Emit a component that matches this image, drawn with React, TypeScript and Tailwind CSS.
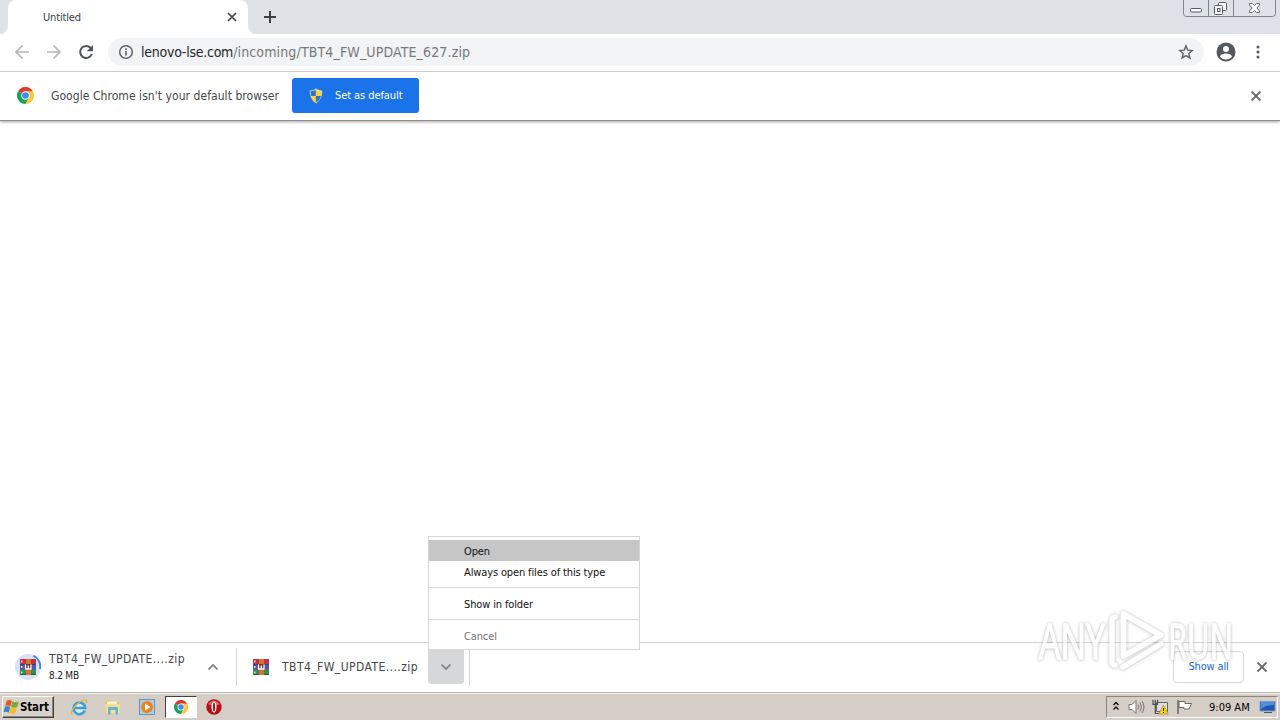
import React from "react";

const Chrome = ({ size }: { size: number }) => (
  <svg width={size} height={size} viewBox="0 0 48 48" className="shrink-0">
    <path d="M24 24 3.2 12A24 24 0 0 1 44.8 12Z" fill="#db3a2c" />
    <path d="M3.2 12A24 24 0 0 0 24 48L34.4 30 24 24Z" fill="#1da05a" />
    <path d="M44.8 12A24 24 0 0 1 24 48L34.4 30 24 12Z" fill="#fcc934" />
    <circle cx="24" cy="24" r="12" fill="#fff" />
    <circle cx="24" cy="24" r="9.3" fill="#4587ec" />
  </svg>
);

const Archive = () => (
  <svg width="16" height="16" viewBox="0 0 16 16" className="shrink-0">
    <path d="M0 0h16v5H0z" fill="#c03048" />
    <path d="M0 5.5h16v5H0z" fill="#4856c8" />
    <path d="M0 11h16v5H0z" fill="#2f9048" />
    <path d="M0 5h16v.7H0zM0 10.4h16v.7H0zM0 15.4h16v.6H0z" fill="#2c2030" />
    <path d="M1 1.5h1.5v2H1zM1 7h1.5v2H1zM1 12.5h1.5v2H1z" fill="#e8dcc8" />
    <path d="M6 0h5v16H6z" fill="#d9702c" />
    <path d="M4.500 5h7.500v6H4.500z" fill="#6b3a34" />
    <path d="M5.500 5.500V10H11V5.500M8.250 6.500V10" fill="none" stroke="#fff" strokeWidth="1.3" />
  </svg>
);

const Close = () => (
  <svg width="12" height="12" viewBox="0 0 12 12" className="shrink-0">
    <path d="m1.5 1.5 9 9m0-9-9 9" stroke="#686c70" strokeWidth="1.8" />
  </svg>
);

const Shield = () => (
  <svg width="14" height="16" viewBox="0 0 14 16" className="shrink-0">
    <path d="M7 .5Q4 2.400.7 2.400.3 11 7 15.500 13.700 11 13.300 2.400 10 2.400 7 .5Z" fill="#dfe7ee" stroke="#5f7f9f" strokeWidth=".5" />
    <path d="M6.900 1.800Q4.500 3.200 1.700 3.300q0 2 .3 4.600h4.900Z" fill="#2f74c4" />
    <path d="M6.900 1.800q2.600 1.400 5.400 1.500 0 2-.3 4.600H6.900Z" fill="#fbd43a" />
    <path d="M6.900 7.900H2q1 4.200 4.900 6.600Z" fill="#fbd43a" />
    <path d="M6.900 7.900H12q-1 4.200-5.100 6.600Z" fill="#2f74c4" />
  </svg>
);

const Flag = () => (
  <svg width="17" height="16" viewBox="0 0 16 16" className="shrink-0">
    <path d="M3.200 1.600Q6 .2 8.400 1.900L6.900 7.500Q4.500 5.800 1.700 7.100Z" fill="#e9572b" />
    <path d="M9 2.300q2.800 1.600 6.400.2l-1.600 5.500q-3.200 1.400-6.200-.2Z" fill="#76ad36" />
    <path d="M1.500 7.800q2.800-1.300 5.200.3L5.200 13.700Q2.800 12 0 13.300Z" fill="#3f82c9" />
    <path d="M7.400 8.500q2.900 1.500 6.200.2L12 14.200q-3.200 1.400-6.100-.2Z" fill="#f6bd2b" />
  </svg>
);

const TabStrip = () => (
  <div className="relative flex h-[34px] shrink-0 bg-[#dee1e6]">
    <div className="flex w-2 items-end bg-white"><div className="h-full w-full rounded-br-lg bg-[#dee1e6]" /></div>
    <div className="flex w-[240px] items-center rounded-t-lg bg-white pr-[10px] pl-[35px]">
      <span className="flex-1 pt-[2px] text-[11px] tracking-[-0.17px] text-[#3c4043]">Untitled</span>
      <svg width="12" height="12" viewBox="0 0 12 12"><path d="m2 2 8 8m0-8-8 8" stroke="#45494d" strokeWidth="1.7" /></svg>
    </div>
    <div className="w-2 bg-white"><div className="h-full w-full rounded-bl-lg bg-[#dee1e6]" /></div>
    <svg width="14" height="14" viewBox="0 0 14 14" className="mt-[10px] ml-[7px]"><path d="M7 1v12M1 7h12" stroke="#3c4043" strokeWidth="2" /></svg>
    <svg width="94" height="18" viewBox="0 0 94 18" className="mr-[3px] ml-auto" fill="none">
      <path d="M.5 0v13.5q0 3 3 3h86q3 0 3-3V0M25.500 0v16.500M50.500 0v16.500" stroke="#80848c" />
      <rect x="7.500" y="8.500" width="11" height="3.500" rx="1" fill="#f8f9fa" stroke="#555b66" />
      <rect x="35.500" y="2.500" width="8" height="8" rx="1" fill="#f8f9fa" stroke="#555b66" />
      <rect x="31.500" y="5.500" width="8" height="9" rx="1" fill="#f8f9fa" stroke="#555b66" />
      <rect x="34.500" y="8.500" width="2.500" height="3" stroke="#555b66" />
      <path d="M66.500 3.500h3l2 2 2-2h3v1.500L74 8l2.500 3v1.500h-3l-2-2-2 2h-3V11L69 8l-2.500-3Z" fill="#f8f9fa" stroke="#666b74" />
    </svg>
  </div>
);

const Toolbar = () => (
  <div className="flex h-[38px] shrink-0 items-center border-b border-[#d8dadd] bg-white pb-[2px] pl-[14px]">
    <svg width="16" height="16" viewBox="0 0 16 16" fill="none" stroke="#b5b7ba" strokeWidth="1.700"><path d="M15 8H2.500M8.500 1.500 2 8l6.500 6.500" /></svg>
    <svg width="16" height="16" viewBox="0 0 16 16" fill="none" stroke="#b5b7ba" strokeWidth="1.700" className="ml-4"><path d="M1 8h12.500M7.500 1.500 14 8l-6.500 6.500" /></svg>
    <svg width="16" height="16" viewBox="0 0 16 16" className="ml-4"><path d="M12.700 4A6 6 0 1 0 13.800 10" fill="none" stroke="#505458" strokeWidth="2" /><path d="M15 1v6.300H8.700Z" fill="#505458" /></svg>
    <div className="ml-[14px] flex h-7 w-[1096px] items-center rounded-full bg-[#f1f3f4] pr-[10px] pl-[10px]">
      <svg width="16" height="16" viewBox="0 0 16 16" fill="none" stroke="#5f6368"><circle cx="8" cy="8" r="6.300" strokeWidth="1.500" /><path d="M8 7v4.500M8 4.300V6" strokeWidth="1.600" /></svg>
      <span className="ml-[7px] flex-1 pt-[2px] text-[14px] tracking-[0.14px] whitespace-nowrap text-[#75797e]"><span className="tracking-[-0.25px] text-[#25282b]">lenovo-lse.com</span>/incoming/TBT4_FW_UPDATE_627.zip</span>
      <svg width="16" height="16" viewBox="0 0 24 24" fill="none" stroke="#5f6368" strokeWidth="2.200"><path d="m12 3 2.600 6.200 6.700.6-5.100 4.400 1.600 6.600-5.800-3.500-5.800 3.500 1.600-6.600-5.100-4.400 6.700-.6Z" /></svg>
    </div>
    <svg width="20" height="20" viewBox="0 0 20 20" className="ml-3"><circle cx="10" cy="10" r="9.500" fill="#54585d" /><circle cx="10" cy="7" r="3" fill="#fff" /><path d="M4 14.500q1-3 6-3t6 3q-2 3-6 3t-6-3Z" fill="#fff" /></svg>
    <svg width="4" height="16" viewBox="0 0 4 16" className="ml-5" fill="#54585d"><circle cx="2" cy="3" r="1.500" /><circle cx="2" cy="8" r="1.500" /><circle cx="2" cy="13" r="1.500" /></svg>
  </div>
);

const InfoBar = () => (
  <div className="z-10 flex h-[49px] shrink-0 items-center border-b border-[#8d8d8d] bg-white pr-[18px] pb-px pl-[17px] shadow-[0_1px_3px_rgba(0,0,0,0.35)]">
    <Chrome size={17} />
    <span className="ml-[17px] w-[241px] text-[12px] tracking-[0.06px] whitespace-nowrap text-[#44474b]">Google Chrome isn't your default browser</span>
    <button className="flex h-[35px] w-[127px] items-center rounded-[3px] bg-[#1a73e8] pl-[17px] text-[11px] tracking-[-0.08px] whitespace-nowrap text-white">
      <Shield />
      <span className="ml-3 pt-px">Set as default</span>
    </button>
    <div className="ml-auto"><Close /></div>
  </div>
);

const Menu = () => (
  <div className="absolute bottom-[42px] left-[428px] z-20 h-[114px] w-[212px] border border-[#d6d6d6] bg-white pt-[3px] text-[11px] tracking-[-0.13px] whitespace-nowrap text-[#111]">
    <div className="flex h-[21px] items-center bg-[#c6c6c6] pt-[3px] pl-[35px]">Open</div>
    <div className="flex h-[22px] items-center pt-[2px] pl-[35px]">Always open files of this type</div>
    <div className="mt-1 flex h-8 items-center border-t border-[#d9d9d9] pt-[3px] pl-[35px]">Show in folder</div>
    <div className="flex h-8 items-center border-t border-[#d9d9d9] pt-[3px] pl-[35px] text-[#757575]">Cancel</div>
  </div>
);

const Shelf = () => (
  <div className="relative flex h-[50px] shrink-0 items-center border-t border-[#d6d8da] bg-white pb-px">
    <div className="flex w-[236px] items-center pl-[15px]">
      <div className="relative flex size-[26px] items-center justify-center rounded-full bg-[#d6e1f5]">
        <Archive />
        <svg width="26" height="26" viewBox="0 0 26 26" className="absolute inset-0" fill="none"><path d="M18.500 1.700A12.200 12.200 0 0 1 25 15" stroke="#4285f4" strokeWidth="2" /></svg>
      </div>
      <div className="ml-2 w-[158px] whitespace-nowrap">
        <div className="text-[12px] leading-[16px] tracking-[0.44px] text-[#44474b]">TBT4_FW_UPDATE....zip</div>
        <div className="text-[10px] leading-[17px] tracking-[-0.2px] text-[#202124]">8.2 MB</div>
      </div>
      <svg width="12" height="8" viewBox="0 0 12 8" fill="none" stroke="#75787c" strokeWidth="1.700"><path d="m1.500 6.500 4.500-4.500 4.500 4.500" /></svg>
    </div>
    <div className="flex h-[38px] w-[192px] items-center border-l border-[#d3d5d8] pl-4">
      <Archive />
      <span className="ml-[13px] text-[12px] tracking-[0.44px] whitespace-nowrap text-[#44474b]">TBT4_FW_UPDATE....zip</span>
    </div>
    <div className="flex h-[34px] w-9 items-center justify-center rounded-b-[3px] bg-[#d6d7d8]">
      <svg width="12" height="8" viewBox="0 0 12 8" fill="none" stroke="#7b7e82" strokeWidth="1.700"><path d="M1.500 1.500 6 6l4.500-4.500" /></svg>
    </div>
    <div className="ml-[5px] h-[38px] w-px bg-[#d3d5d8]" />
    <button className="ml-auto flex h-8 w-[71px] items-center justify-center rounded-[4px] border border-[#d6d9dd] bg-white pt-px text-[11px] tracking-[-0.15px] text-[#1967d2]">Show all</button>
    <div className="mr-3 ml-3"><Close /></div>
    <Menu />
  </div>
);

const Taskbar = () => (
  <div className="flex h-7 shrink-0 items-center border-t border-[#b9b7b3] bg-[#d5cec6] pt-px shadow-[inset_0_1px_0_#f5f3ef]">
    <button className="ml-[2px] flex h-[22px] w-[52px] items-center border border-t-white border-r-[#404040] border-b-[#404040] border-l-white bg-[#d8d2ca] text-[11.5px] font-bold tracking-[-0.15px] text-black shadow-[inset_-1px_-1px_0_#8c8780]">
      <Flag />
      <span className="pt-px">Start</span>
    </button>
    <svg width="18" height="18" viewBox="0 0 18 18" className="ml-4 shrink-0" fill="none">
      <circle cx="9.500" cy="10" r="5.700" fill="#d8edf8" />
      <path d="M14.800 12.500A5.800 5.800 0 1 1 15.200 10H5" stroke="#3c9ddd" strokeWidth="2.500" />
      <path d="M2.500 16.500C-1 14.500 6 5 14 2q4-1 2.500 2.700" stroke="#e2b439" strokeWidth="1.200" />
    </svg>
    <svg width="18" height="18" viewBox="0 0 18 18" className="ml-4 shrink-0">
      <path d="M1.500 2.500h5l1 1.500h8v11h-14Z" fill="#e5c565" />
      <path d="M3 3.500h10V8H3z" fill="#f7f3cd" /><path d="M1.500 6h14.500v9H1.500z" fill="#f3dd91" />
      <path d="M4 16.500V10q0-1 1-1h8q1 0 1 1v6.500h-2.500V12h-5v4.500Z" fill="#65b5db" />
    </svg>
    <svg width="18" height="18" viewBox="0 0 18 18" className="ml-4 shrink-0">
      <rect x="1.500" y="1.500" width="15" height="15" fill="#a9cdea" stroke="#5e96c4" />
      <circle cx="9" cy="9" r="6" fill="#ef8318" /><path d="m7 5.500 5.500 3.500L7 12.500Z" fill="#fff" />
    </svg>
    <div className="ml-[9px] flex h-[22px] w-8 items-center justify-center border border-t-[#404040] border-r-white border-b-white border-l-[#404040] bg-white"><Chrome size={14} /></div>
    <svg width="16" height="16" viewBox="0 0 16 16" className="ml-[9px] shrink-0"><circle cx="8" cy="8" r="7.700" fill="#b71118" /><path d="M2 5q6-7 12 0-6 3-12 0Z" fill="#dc6b6c" /><ellipse cx="8" cy="8" rx="2.500" ry="5.500" fill="#fff" /><ellipse cx="8" cy="8" rx="1.100" ry="4.500" fill="#aa151a" /></svg>
    <div className="mr-[2px] ml-auto flex h-[22px] w-[172px] items-center border border-t-[#8b8680] border-r-white border-b-white border-l-[#8b8680] text-[11px] text-black">
      <svg width="8" height="10" viewBox="0 0 8 10" className="mb-[2px] ml-[5px]" fill="none" stroke="#111" strokeWidth="1.400"><path d="m1.500 4 2.500-2.500L6.500 4m-5 4.500L4 6l2.500 2.500" /></svg>
      <svg width="17" height="16" viewBox="0 0 17 16" className="ml-2 shrink-0" fill="none"><path d="M1 5.500h3l4-4v13l-4-4H1Z" fill="#fff" stroke="#77736e" /><path d="M10 5.500q1.500 2.500 0 5M12 3.500q3 4.500 0 9M14 2q4 6 0 12" stroke="#77736e" /></svg>
      <svg width="17" height="16" viewBox="0 0 17 16" className="ml-[7px] shrink-0" fill="none"><path d="M4.500 3.500h11v9h-11z" fill="#d9dde2" stroke="#66676a" /><path d="M1 .8v4.500h4.500V.8M3.300 1v13.500h5" stroke="#514e4a" strokeWidth="1.200" /><path d="m11.500 6 4.700 9H6.800Z" fill="#f7cf24" stroke="#b68b14" strokeWidth=".7" /><path d="M11.500 9v3m0 1v1" stroke="#222" /></svg>
      <svg width="17" height="16" viewBox="0 0 17 16" className="ml-[7px] shrink-0"><path d="M2 1v14" stroke="#68645f" strokeWidth="1.500" /><path d="M3 2.500h6v2h6.500L13 10H8V8.500H3Z" fill="#fff" stroke="#68645f" /></svg>
      <span className="ml-[16px] w-[42px] pt-[2px] whitespace-nowrap">9:09 AM</span>
      <svg width="17" height="14" viewBox="0 0 17 14" className="ml-[8px] shrink-0"><path d="M1 1.500h15v9.500H1z" fill="#1d57ad" stroke="#7898c2" /><path d="M2 2h13v3Q7 5 2 9Z" fill="#528ed6" /><path d="M5 12.500h8" stroke="#555" /></svg>
    </div>
  </div>
);

const Watermark = () => (
  <svg width="220" height="100" viewBox="1026 596 220 100" className="pointer-events-none absolute top-[596px] left-[1026px] z-30 [filter:drop-shadow(0_0_1.5px_rgba(0,0,0,0.3))_drop-shadow(0_1px_2px_rgba(0,0,0,0.12))]" fill="#fff" fontFamily="Open Sans, sans-serif" fontSize="50" opacity=".72">
    <g stroke="#fff" strokeWidth="1.500">
      <text x="1039" y="659" textLength="66" lengthAdjust="spacingAndGlyphs">ANY</text>
      <text x="1168" y="659" textLength="65" lengthAdjust="spacingAndGlyphs">RUN</text>
    </g>
    <path d="M1123.500 614v42l37-21Z" fill="none" stroke="#fff" strokeWidth="6" strokeLinejoin="round" />
    <path d="M1115 617q-3 0-3 3v42q0 3 3 3M1123 667l38-23" fill="none" stroke="#fff" strokeWidth="5.500" strokeLinecap="round" />
  </svg>
);

export default function App() {
  return (
    <main className="relative flex h-[720px] w-[1280px] flex-col overflow-hidden bg-white [font-family:'DejaVu_Sans_Condensed','DejaVu_Sans',sans-serif]">
      <TabStrip />
      <Toolbar />
      <InfoBar />
      <div className="flex-1" />
      <Shelf />
      <Taskbar />
      <Watermark />
    </main>
  );
}
